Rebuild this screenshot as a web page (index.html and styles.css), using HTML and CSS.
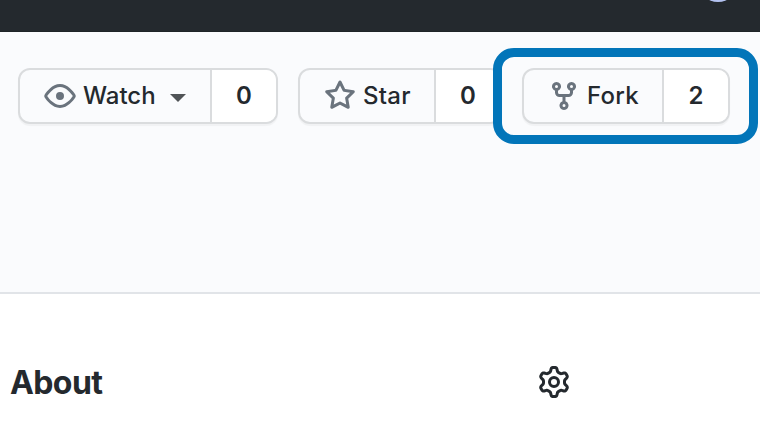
FILE: index.html
```html
<!DOCTYPE html>
<html lang="en">
<head>
<meta charset="utf-8">
<title>Repository</title>
<link rel="stylesheet" href="styles.css">
</head>
<body>
<header class="topbar"><span class="avatar"></span></header>
<section class="repo-head">
  <div class="actions">
    <div class="group watch">
      <div class="action">
        <svg class="icon" viewBox="0 0 16 16"><path fill-rule="evenodd" d="M1.679 7.932c.412-.621 1.242-1.75 2.366-2.717C5.175 4.242 6.527 3.5 8 3.5c1.473 0 2.824.742 3.955 1.715 1.124.967 1.954 2.096 2.366 2.717a.119.119 0 010 .136c-.412.621-1.242 1.75-2.366 2.717C10.825 11.758 9.473 12.5 8 12.5c-1.473 0-2.824-.742-3.955-1.715C2.92 9.818 2.09 8.69 1.679 8.068a.119.119 0 010-.136zM8 2c-1.981 0-3.67.992-4.933 2.078C1.797 5.169.88 6.423.43 7.1a1.619 1.619 0 000 1.798c.45.678 1.367 1.932 2.637 3.024C4.329 13.008 6.019 14 8 14c1.981 0 3.67-.992 4.933-2.078 1.27-1.091 2.187-2.345 2.637-3.023a1.619 1.619 0 000-1.798c-.45-.678-1.367-1.932-2.637-3.023C11.671 2.992 9.981 2 8 2zm0 8a2 2 0 100-4 2 2 0 000 4z"/></svg>
        <span class="label">Watch</span>
        <span class="caret"></span>
      </div>
      <div class="count">0</div>
    </div>
    <div class="group star">
      <div class="action">
        <svg class="icon" viewBox="0 0 16 16"><path fill-rule="evenodd" d="M8 .25a.75.75 0 01.673.418l1.882 3.815 4.21.612a.75.75 0 01.416 1.279l-3.046 2.97.719 4.192a.75.75 0 01-1.088.791L8 12.347l-3.766 1.98a.75.75 0 01-1.088-.79l.72-4.194L.818 6.374a.75.75 0 01.416-1.28l4.21-.611L7.327.668A.75.75 0 018 .25zm0 2.445L6.615 5.5a.75.75 0 01-.564.41l-3.097.45 2.24 2.184a.75.75 0 01.216.664l-.528 3.084 2.769-1.456a.75.75 0 01.698 0l2.77 1.456-.53-3.084a.75.75 0 01.216-.664l2.24-2.183-3.096-.45a.75.75 0 01-.564-.41L8 2.694v.001z"/></svg>
        <span class="label">Star</span>
      </div>
      <div class="count">0</div>
    </div>
    <div class="group fork">
      <div class="action">
        <svg class="icon" viewBox="0 0 16 16"><path fill-rule="evenodd" d="M5 3.25a.75.75 0 11-1.5 0 .75.75 0 011.5 0zm0 2.122a2.25 2.25 0 10-1.5 0v.878A2.25 2.25 0 005.75 8.5h1.5v2.128a2.251 2.251 0 101.5 0V8.5h1.5a2.25 2.25 0 002.25-2.25v-.878a2.25 2.25 0 10-1.5 0v.878a.75.75 0 01-.75.75h-4.5A.75.75 0 015 6.25v-.878zm3.75 7.378a.75.75 0 11-1.5 0 .75.75 0 011.5 0zm3-8.75a.75.75 0 100-1.5.75.75 0 000 1.5z"/></svg>
        <span class="label">Fork</span>
      </div>
      <div class="count">2</div>
      <div class="highlight"></div>
    </div>
  </div>
</section>
<main class="about">
  <h2 class="title">About</h2>
  <svg class="gear" viewBox="0 0 16 16"><path fill-rule="evenodd" d="M7.429 1.525a6.593 6.593 0 011.142 0c.036.003.108.036.137.146l.289 1.105c.147.56.55.967.997 1.189.174.086.341.183.501.29.417.278.97.423 1.53.27l1.102-.303c.11-.03.175.016.195.046.219.31.41.641.573.989.014.031.022.11-.059.19l-.815.806c-.411.406-.562.957-.53 1.456a4.588 4.588 0 010 .582c-.032.499.119 1.05.53 1.456l.815.806c.08.08.073.159.059.19a6.494 6.494 0 01-.573.99c-.02.029-.086.074-.195.045l-1.103-.303c-.559-.153-1.112-.008-1.529.27-.16.107-.327.204-.5.29-.449.222-.851.628-.998 1.189l-.289 1.105c-.029.11-.101.143-.137.146a6.613 6.613 0 01-1.142 0c-.036-.003-.108-.037-.137-.146l-.289-1.105c-.147-.56-.55-.967-.997-1.189a4.502 4.502 0 01-.501-.29c-.417-.278-.97-.423-1.53-.27l-1.102.303c-.11.03-.175-.016-.195-.046a6.492 6.492 0 01-.573-.989c-.014-.031-.022-.11.059-.19l.815-.806c.411-.406.562-.957.53-1.456a4.587 4.587 0 010-.582c.032-.499-.119-1.05-.53-1.456l-.815-.806c-.08-.08-.073-.159-.059-.19a6.44 6.44 0 01.573-.99c.02-.029.086-.075.195-.045l1.103.303c.559.153 1.112.008 1.529-.27.16-.107.327-.204.5-.29.449-.222.851-.628.998-1.189l.289-1.105c.029-.11.101-.143.137-.146zM8 0c-.236 0-.47.01-.701.03-.743.065-1.29.615-1.458 1.261l-.29 1.106c-.017.066-.078.158-.211.224a5.994 5.994 0 00-.668.386c-.123.082-.233.09-.3.071L3.27 2.776c-.644-.177-1.392.02-1.82.63a7.977 7.977 0 00-.704 1.217c-.315.675-.111 1.422.363 1.891l.815.806c.05.048.098.147.088.294a6.084 6.084 0 000 .772c.01.147-.038.246-.088.294l-.815.806c-.474.469-.678 1.216-.363 1.891.2.428.436.835.704 1.218.428.609 1.176.806 1.82.63l1.103-.303c.066-.019.176-.011.299.071.213.143.436.272.668.386.133.066.194.158.212.224l.289 1.106c.169.646.715 1.196 1.458 1.26a8.094 8.094 0 001.402 0c.743-.064 1.29-.614 1.458-1.26l.29-1.106c.017-.066.078-.158.211-.224a5.98 5.98 0 00.668-.386c.123-.082.233-.09.3-.071l1.102.302c.644.177 1.392-.02 1.82-.63.268-.382.505-.789.704-1.217.315-.675.111-1.422-.364-1.891l-.814-.806c-.05-.048-.098-.147-.088-.294a6.1 6.1 0 000-.772c-.01-.147.039-.246.088-.294l.814-.806c.475-.469.679-1.216.364-1.891a7.992 7.992 0 00-.704-1.218c-.428-.609-1.176-.806-1.82-.63l-1.103.303c-.066.019-.176.011-.299-.071a5.991 5.991 0 00-.668-.386c-.133-.066-.194-.158-.212-.224L10.16 1.29C9.99.645 9.444.095 8.701.031A8.094 8.094 0 008 0zm1.5 8a1.5 1.5 0 11-3 0 1.5 1.5 0 013 0zM11 8a3 3 0 11-6 0 3 3 0 016 0z"/></svg>
</main>
</body>
</html>
```
FILE: styles.css
```css
* { box-sizing: border-box; }
body {
  margin: 0;
  background: #fff;
  color: #24292e;
  font-family: Inter, "Liberation Sans", sans-serif;
  overflow: hidden;
}
.topbar {
  height: 32px;
  background: #24292e;
  border-bottom: 1px solid #1f2428;
  position: relative;
  overflow: hidden;
}
.avatar {
  position: absolute;
  left: 698px;
  top: -38px;
  width: 40px;
  height: 40px;
  border-radius: 50%;
  background: #b3c2f0;
}
.repo-head {
  height: 262px;
  padding: 36px 0 0 18px;
  background: #fafbfd;
  border-bottom: 2px solid #e1e4e8;
}
.actions { display: flex; }
.group {
  display: flex;
  position: relative;
  height: 56px;
  border: 2px solid #dadcde;
  border-radius: 12px;
  background: #fafbfd;
  box-shadow: 0 2px 1px rgba(27, 31, 35, .04);
}
.watch { width: 260px; margin-right: 20px; }
.star { width: 204px; margin-right: 20px; }
.fork { width: 208px; }
.action {
  flex: 1;
  display: flex;
  align-items: center;
  padding-left: 24px;
  font-size: 24px;
  font-weight: 500;
  line-height: 40px;
}
.icon { width: 32px; height: 32px; fill: #6a737d; flex: none; }
.label { margin-left: 7px; }
.star .label, .fork .label { letter-spacing: .25px; }
.caret {
  margin: 3px 0 0 14px;
  border: 8px solid transparent;
  border-top-color: #505457;
  border-bottom: 0;
}
.count {
  width: 66px;
  border-left: 2px solid #dadcde;
  border-radius: 0 10px 10px 0;
  background: #fff;
  font-size: 24px;
  font-weight: 600;
  line-height: 52px;
  text-align: center;
}
.highlight {
  position: absolute;
  left: -31px;
  top: -22px;
  width: 265px;
  height: 96px;
  border: 9px solid #0275b9;
  border-radius: 21px;
  pointer-events: none;
}
.about { display: flex; align-items: center; padding: 64px 0 0 10px; }
.title {
  width: 528px;
  margin: 0;
  padding-top: 2px;
  font-size: 32px;
  font-weight: 650;
  letter-spacing: -.6px;
  line-height: 46px;
}
.gear { width: 32px; height: 32px; fill: #24292e; }
```
